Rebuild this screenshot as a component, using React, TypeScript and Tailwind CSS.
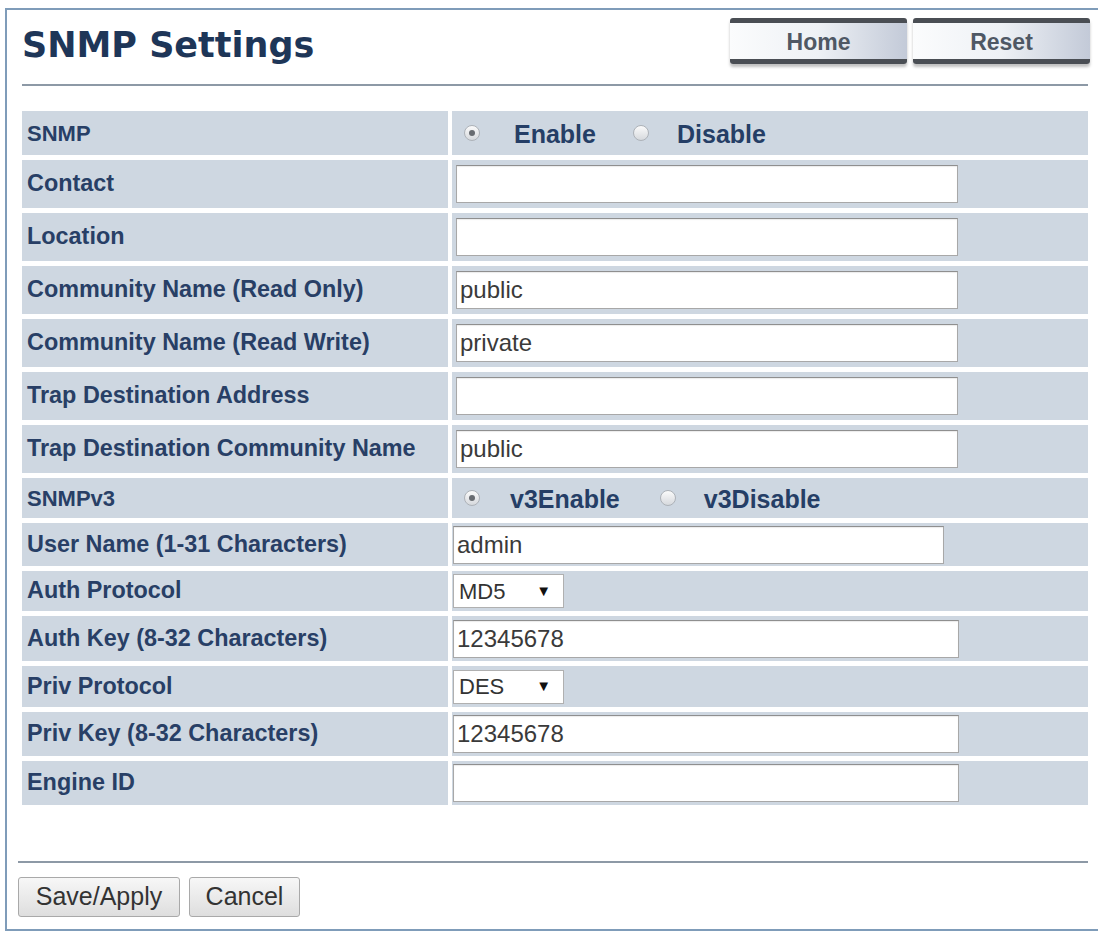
import React from 'react'

const sans = { fontFamily: '"Liberation Sans", Arial, sans-serif' }

function Radio({ checked }: { checked?: boolean }) {
  return (
    <span className="flex h-[16px] w-[16px] shrink-0 items-center justify-center rounded-full border border-[#adb2b8] bg-gradient-to-b from-[#fbfbfb] to-[#d6d9dd]">
      {checked && <span className="h-[6px] w-[6px] rounded-full bg-[#686c71]" />}
    </span>
  )
}

function TextBox({ value = '', width }: { value?: string; width: string }) {
  return (
    <div
      className={`${width} flex h-[38px] items-center border border-[#a8a8a8] border-t-[#8f8f8f] bg-white pl-[3px] text-[24px] text-[#3a3a3a] shadow-[inset_0_1px_1px_rgba(0,0,0,0.08)]`}
    >
      {value}
    </div>
  )
}

function Select({ value }: { value: string }) {
  return (
    <div className="flex h-[34px] w-[111px] items-center border border-[#b0b0b0] bg-white pl-[5px] text-[22px] text-[#333]">
      <span>{value}</span>
      <span className="ml-auto mr-[12px] text-[15px] text-[#111]">▼</span>
    </div>
  )
}

function HeadButton({ label }: { label: string }) {
  return (
    <div className="flex h-[46px] w-[177px] items-center justify-center rounded-[3px] border-y-[5px] border-[#4a4e54] bg-gradient-to-r from-[#fbfcfd] via-[#eef1f5] to-[#c3cad8] pt-[2px] shadow-[0_3px_3px_rgba(0,0,0,0.25)]">
      <span className="text-[23px] font-bold text-[#4f5864]">{label}</span>
    </div>
  )
}

type Row = {
  label: string
  h: string
  small?: boolean
  kind: 'radio' | 'radio3' | 'text' | 'select'
  value?: string
  width?: string
  inset?: boolean
}

const rows: Row[] = [
  { label: 'SNMP', h: 'h-[44px]', small: true, kind: 'radio' },
  { label: 'Contact', h: 'h-[48px]', kind: 'text', width: 'w-[502px]', inset: true },
  { label: 'Location', h: 'h-[48px]', kind: 'text', width: 'w-[502px]', inset: true },
  { label: 'Community Name (Read Only)', h: 'h-[48px]', kind: 'text', value: 'public', width: 'w-[502px]', inset: true },
  { label: 'Community Name (Read Write)', h: 'h-[48px]', kind: 'text', value: 'private', width: 'w-[502px]', inset: true },
  { label: 'Trap Destination Address', h: 'h-[48px]', kind: 'text', width: 'w-[502px]', inset: true },
  { label: 'Trap Destination Community Name', h: 'h-[48px]', kind: 'text', value: 'public', width: 'w-[502px]', inset: true },
  { label: 'SNMPv3', h: 'h-[40px]', small: true, kind: 'radio3' },
  { label: 'User Name (1-31 Characters)', h: 'h-[43px]', kind: 'text', value: 'admin', width: 'w-[491px]' },
  { label: 'Auth Protocol', h: 'h-[40px]', kind: 'select', value: 'MD5' },
  { label: 'Auth Key (8-32 Characters)', h: 'h-[45px]', kind: 'text', value: '12345678', width: 'w-[506px]' },
  { label: 'Priv Protocol', h: 'h-[41px]', kind: 'select', value: 'DES' },
  { label: 'Priv Key (8-32 Characters)', h: 'h-[44px]', kind: 'text', value: '12345678', width: 'w-[506px]' },
  { label: 'Engine ID', h: 'h-[44px]', kind: 'text', width: 'w-[506px]' },
]

export default function App() {
  return (
    <div className="min-h-screen bg-white pl-[5px] pt-[8px]" style={sans}>
      <div className="flex h-[923px] flex-col border-y-2 border-l-2 border-[#7f9cb9] pl-[15px] pr-[10px]">
        {/* Header */}
        <div className="flex h-[74px] items-start justify-between">
          <h1
            className="mt-[15px] text-[35px] font-bold leading-[40px] text-[#1e3658]"
            style={{ fontFamily: '"DejaVu Sans", Verdana, sans-serif' }}
          >
            SNMP Settings
          </h1>
          <div className="mr-[-2px] mt-[8px] flex gap-[6px]">
            <HeadButton label="Home" />
            <HeadButton label="Reset" />
          </div>
        </div>
        <div className="h-[2px] bg-[#8d99a6]" />

        {/* Settings table */}
        <div className="mt-[25px] grid grid-cols-[426px_1fr] gap-x-[4px] gap-y-[5px]">
          {rows.map((r) => (
            <React.Fragment key={r.label}>
              <div
                className={`${r.h} flex items-center bg-[#ced7e1] pl-[5px] font-bold text-[#283f66] ${
                  r.small ? 'text-[22px]' : 'text-[23.4px]'
                }`}
              >
                {r.label}
              </div>
              <div className={`${r.h} flex items-center bg-[#ced7e1]`}>
                {r.kind === 'radio' && (
                  <div className="flex items-center pt-[3px] text-[25px] font-bold text-[#253e66]">
                    <span className="ml-[12px] flex -mt-[4px]"><Radio checked /></span>
                    <span className="ml-[34px]">Enable</span>
                    <span className="ml-[37px] flex -mt-[4px]"><Radio /></span>
                    <span className="ml-[28px]">Disable</span>
                  </div>
                )}
                {r.kind === 'radio3' && (
                  <div className="flex items-center pt-[3px] text-[25px] font-bold text-[#253e66]">
                    <span className="ml-[12px] flex -mt-[4px]"><Radio checked /></span>
                    <span className="ml-[30px]">v3Enable</span>
                    <span className="ml-[40px] flex -mt-[4px]"><Radio /></span>
                    <span className="ml-[28px]">v3Disable</span>
                  </div>
                )}
                {r.kind === 'text' && (
                  <div className={r.inset ? 'ml-[4px]' : 'ml-[1px]'}>
                    <TextBox value={r.value} width={r.width ?? 'w-[502px]'} />
                  </div>
                )}
                {r.kind === 'select' && (
                  <div className="ml-[1px]">
                    <Select value={r.value ?? ''} />
                  </div>
                )}
              </div>
            </React.Fragment>
          ))}
        </div>

        {/* Footer */}
        <div className="mt-auto -ml-[4px] mb-[12px]">
          <div className="h-[2px] bg-[#8d99a6]" />
          <div className="mt-[14px] flex gap-[9px]">
            <button className="h-[40px] w-[162px] rounded-[3px] border border-[#a9a9a9] bg-gradient-to-b from-[#f7f7f7] to-[#dedede] text-[25px] text-[#333]">
              Save/Apply
            </button>
            <button className="h-[40px] w-[111px] rounded-[3px] border border-[#a9a9a9] bg-gradient-to-b from-[#f7f7f7] to-[#dedede] text-[25px] text-[#333]">
              Cancel
            </button>
          </div>
        </div>
      </div>
    </div>
  )
}
